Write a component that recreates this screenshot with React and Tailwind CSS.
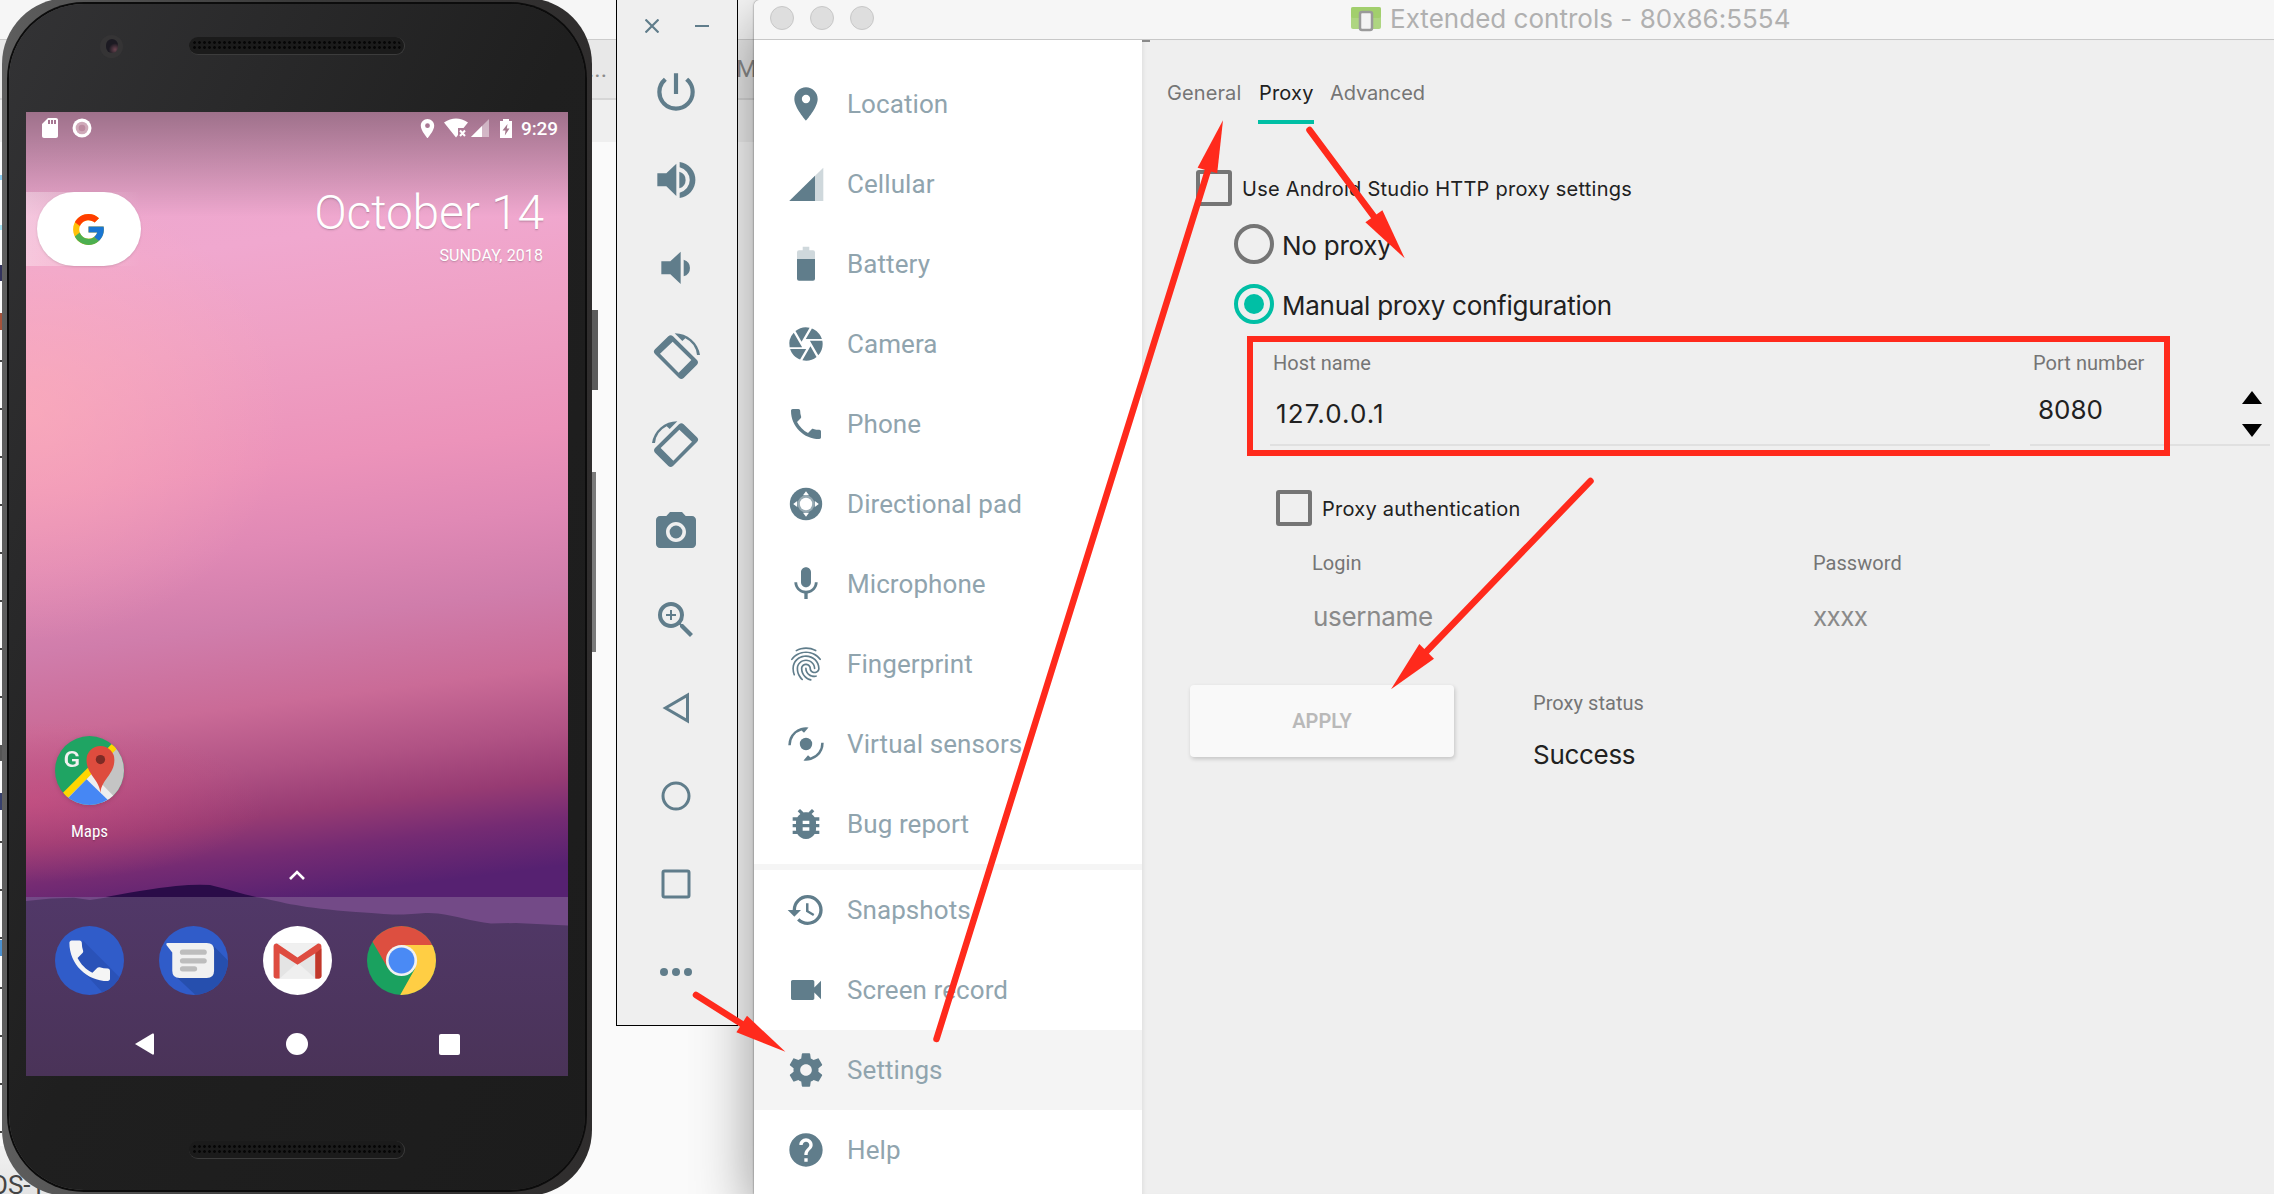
import React from "react";
import {
  MdLocationOn, MdCamera, MdPhone, MdMic, MdFingerprint, MdBugReport, MdHistory,
  MdVideocam, MdHelp, MdPowerSettingsNew, MdPhotoCamera, MdZoomIn, MdSdCard,
} from "react-icons/md";
import { FcGoogle } from "react-icons/fc";

/* ---------- sidebar icons ---------- */

const CellularIcon = () => (
  <svg viewBox="0 0 40 40" className="size-10">
    <path d="M3.3 37L37.3 3.7V37z" fill="#cfd8dc" />
    <path d="M3.3 37L29 11.8V37z" fill="#607d8b" />
  </svg>
);

const BatteryIcon = () => (
  <svg viewBox="0 0 40 40" className="size-10">
    <path d="M13 6.3h3.7V2.8h6.6v3.5H27a2 2 0 0 1 2 2V15H11V8.300a2 2 0 0 1 2-2z" fill="#cfd8dc" />
    <path d="M11 15h18v19.700a2 2 0 0 1-2 2H13a2 2 0 0 1-2-2z" fill="#607d8b" />
  </svg>
);

const DpadIcon = () => (
  <svg viewBox="0 0 40 40" className="size-10">
    <circle cx="20" cy="20" r="16.2" fill="#607d8b" />
    <circle cx="20" cy="20" r="8.400" fill="#fff" fillOpacity="0.350" />
    <circle cx="20" cy="20" r="6.2" fill="#fff" />
    <path d="M20 7.200l3 4h-6zM20 32.800l3-4h-6zM7.200 20l4 3v-6zM32.800 20l-4 3v-6z" fill="#fff" />
  </svg>
);

const SensorsIcon = () => (
  <svg viewBox="0 0 40 40" className="size-10" fill="#607d8b">
    <circle cx="20" cy="20" r="6.200" />
    <path d="M2.300 21.300A17.700 17.700 0 0 1 22.500 3.500L18 8.800L15.500 6.500A15 15 0 0 0 4.800 21.300z" />
    <path d="M37.700 18.700A17.700 17.700 0 0 1 17.500 36.500L22 31.200L24.500 33.500A15 15 0 0 0 35.200 18.700z" />
  </svg>
);

const GearIcon = () => (
  <svg viewBox="0 0 24 24" className="size-10" fill="#607d8b">
    <path d="M19.43 12.98c.04-.32.07-.64.07-.98s-.03-.66-.07-.98l2.11-1.65c.19-.15.24-.42.12-.64l-2-3.46c-.12-.22-.39-.3-.61-.22l-2.49 1c-.52-.4-1.08-.73-1.69-.98l-.38-2.65C14.46 2.18 14.25 2 14 2h-4c-.25 0-.46.18-.49.42l-.38 2.65c-.61.25-1.17.59-1.69.98l-2.49-1c-.23-.09-.49 0-.61.22l-2 3.46c-.13.22-.07.49.12.64l2.11 1.65c-.04.32-.07.65-.07.98s.03.66.07.98l-2.11 1.65c-.19.15-.24.42-.12.64l2 3.46c.12.22.39.3.61.22l2.49-1c.52.4 1.08.73 1.69.98l.38 2.65c.03.24.24.42.49.42h4c.25 0 .46-.18.49-.42l.38-2.65c.61-.25 1.17-.59 1.69-.98l2.49 1c.23.09.49 0 .61-.22l2-3.46c.12-.22.07-.49-.12-.64l-2.11-1.65zM12 15.5c-1.93 0-3.5-1.57-3.5-3.5s1.57-3.5 3.5-3.5 3.5 1.57 3.5 3.5-1.57 3.5-3.5 3.5z" />
  </svg>
);

const menu = [
  ["Location", <MdLocationOn className="size-10" />],
  ["Cellular", <CellularIcon />],
  ["Battery", <BatteryIcon />],
  ["Camera", <MdCamera className="size-10" />],
  ["Phone", <MdPhone className="size-10" />],
  ["Directional pad", <DpadIcon />],
  ["Microphone", <MdMic className="size-10" />],
  ["Fingerprint", <MdFingerprint className="size-10" />],
  ["Virtual sensors", <SensorsIcon />],
  ["Bug report", <MdBugReport className="size-10" />],
  null,
  ["Snapshots", <MdHistory className="size-10" />],
  ["Screen record", <MdVideocam className="size-10" />],
  ["Settings", <GearIcon />],
  ["Help", <MdHelp className="size-10" />],
];

/* ---------- toolbar icons ---------- */

const RotateIcon = ({ className }) => (
  <svg viewBox="33 573 150 150" className={className} fill="#607d8b">
    <path
      fillRule="evenodd"
      d="M45 628L85 589Q92 583 99 589L171 660Q177 667 171 674L131 714Q124 720 117 714L45 642Q38 635 45 628zM60 641L116 698L154 660L98 605z"
    />
    <path d="M180 645A76 76 0 0 0 104 580L127 603L136 595A64 64 0 0 1 171 645z" />
  </svg>
);

const tools = [
  <MdPowerSettingsNew className="size-[50px]" />,
  <svg viewBox="33 45 150 150" className="size-[50px]" fill="#607d8b">
    <path d="M52 100H79L109 71V168L79 139H52z" />
    <path d="M118 95A26 26 0 0 1 118 145z" />
    <path d="M119 66A54.500 54.500 0 0 1 119 174V158A39 39 0 0 0 119 82z" />
  </svg>,
  <svg viewBox="33 309 150 150" className="size-[50px]" fill="#607d8b">
    <path d="M64 364H91L122 335V432L91 403H64z" />
    <path d="M131 359A26 26 0 0 1 131 409z" />
  </svg>,
  <RotateIcon className="size-[50px]" />,
  <RotateIcon className="size-[50px] -scale-x-100" />,
  <MdPhotoCamera className="size-12" />,
  <MdZoomIn className="size-12" />,
  <svg viewBox="0 0 48 48" className="size-12" fill="none" stroke="#607d8b" strokeWidth="3">
    <path d="M35.500 11.200V36.800L13.500 24z" />
  </svg>,
  <svg viewBox="0 0 48 48" className="size-12" fill="none" stroke="#607d8b" strokeWidth="3">
    <circle cx="24" cy="24" r="13" />
  </svg>,
  <svg viewBox="0 0 48 48" className="size-12" fill="none" stroke="#607d8b" strokeWidth="3">
    <rect x="11" y="11" width="26" height="26" rx="1.500" />
  </svg>,
  <svg viewBox="0 0 48 48" className="size-12" fill="#607d8b">
    <circle cx="12" cy="24" r="4" />
    <circle cx="24" cy="24" r="4" />
    <circle cx="36" cy="24" r="4" />
  </svg>,
];

/* ---------- phone ---------- */

const Wallpaper = () => (
  <svg viewBox="0 0 542 964" className="absolute inset-0 h-full w-full">
    <defs>
      <linearGradient id="sky" gradientUnits="userSpaceOnUse" x1="190" y1="0" x2="290" y2="785">
        <stop offset="0" stopColor="#e9a6cc" />
        <stop offset="0.17" stopColor="#f0a8cf" />
        <stop offset="0.3" stopColor="#efa0c4" />
        <stop offset="0.45" stopColor="#ec93ba" />
        <stop offset="0.55" stopColor="#e089b5" />
        <stop offset="0.65" stopColor="#d07dab" />
        <stop offset="0.75" stopColor="#ca6b97" />
        <stop offset="0.83" stopColor="#b05284" />
        <stop offset="0.89" stopColor="#973b73" />
        <stop offset="0.94" stopColor="#752b73" />
        <stop offset="1" stopColor="#562171" />
      </linearGradient>
      <radialGradient id="glow" cx="0.5" cy="0.5" r="0.5">
        <stop offset="0" stopColor="#ffb0b8" stopOpacity="0.6" />
        <stop offset="1" stopColor="#ffb0b8" stopOpacity="0" />
      </radialGradient>
      <radialGradient id="ember" cx="0.5" cy="0.5" r="0.5">
        <stop offset="0" stopColor="#d84f80" stopOpacity="0.45" />
        <stop offset="1" stopColor="#d84f80" stopOpacity="0" />
      </radialGradient>
      <linearGradient id="scrim" x1="0" y1="0" x2="0" y2="1">
        <stop offset="0" stopOpacity="0.32" />
        <stop offset="1" stopOpacity="0" />
      </linearGradient>
      <linearGradient id="ground" x1="0" y1="0" x2="0" y2="1">
        <stop offset="0" stopColor="#513868" />
        <stop offset="1" stopColor="#4a3358" />
      </linearGradient>
    </defs>
    <rect width="542" height="964" fill="url(#sky)" />
    <ellipse cx="0" cy="300" rx="260" ry="230" fill="url(#glow)" />
    <ellipse cx="0" cy="690" rx="240" ry="80" fill="url(#ember)" />
    <rect width="542" height="105" fill="url(#scrim)" />
    <path d="M70 787C100 781 130 776 150 774Q170 772 184 773C205 778 215 782 235 786z" fill="#2a0c48" />
    <rect y="785" width="542" height="179" fill="#734a87" />
    <path
      d="M0 789L25 786.500L48 785.800L64 788L84 785H229C245 787 255 791 270 793Q290 797 330 800T373 802.500C390 802 400 800 412 801.500C430 804 445 809 465 811.500L490 811L542 813.500V964H0z"
      fill="url(#ground)"
    />
  </svg>
);

const MapsIcon = () => (
  <svg viewBox="0 0 208 208" className="size-[69px] drop-shadow-sm">
    <clipPath id="mapsClip"><circle cx="104" cy="104" r="104" /></clipPath>
    <g clipPath="url(#mapsClip)">
      <rect width="208" height="208" fill="#1fa463" />
      <path d="M0 212L190 20L208 30V208H0z" fill="#c4c4c4" />
      <path d="M95 130L110 112L185 190L150 208z" fill="#eee" />
      <path d="M95 130L20 208H175z" fill="#4687f4" />
      <path d="M26 184L186 24" stroke="#ffd600" strokeWidth="21" />
    </g>
    <text x="26" y="95" fontFamily="Roboto" fontSize="74" fontWeight="500" fill="#f1f1f1">G</text>
    <path d="M137 171C133 130 95 115 95 72A42 42 0 0 1 179 72C179 115 141 130 137 171z" fill="#de4c3e" />
    <circle cx="137" cy="71" r="14" fill="#7d2b25" />
  </svg>
);

const DialerIcon = () => (
  <svg viewBox="0 0 208 208" className="size-[69px]">
    <clipPath id="dialClip"><circle cx="104" cy="104" r="104" /></clipPath>
    <circle cx="104" cy="104" r="104" fill="#305cc9" />
    <path clipPath="url(#dialClip)" d="M84 44L208 168V208H150L60 110z" fill="#2a52b8" />
    <g transform="translate(23 23) scale(6.800)">
      <path fill="#f5f5f5" d="M6.620 10.790c1.440 2.830 3.760 5.140 6.590 6.590l2.200-2.200c.27-.27.67-.36 1.020-.24 1.120.37 2.330.57 3.570.57.55 0 1 .45 1 1V20c0 .55-.45 1-1 1-9.390 0-17-7.610-17-17 0-.55.45-1 1-1h3.500c.55 0 1 .45 1 1 0 1.250.2 2.450.57 3.570.11.35.03.74-.25 1.020l-2.200 2.200z" />
    </g>
  </svg>
);

const MessagesIcon = () => (
  <svg viewBox="0 0 208 208" className="size-[69px]">
    <clipPath id="msgClip"><circle cx="104" cy="104" r="104" /></clipPath>
    <circle cx="104" cy="104" r="104" fill="#305cc9" />
    <path clipPath="url(#msgClip)" d="M160 56L208 104V208H110L46 148z" fill="#264fae" />
    <path d="M26 51H144Q166 51 166 73V135Q166 157 144 157H62Q40 157 40 135V80L23 58Q20 51 26 51z" fill="#f1f1f1" />
    <g fill="#bdbdbd">
      <rect x="63" y="71" width="81" height="16" rx="8" />
      <rect x="63" y="97" width="81" height="16" rx="8" />
      <rect x="63" y="121" width="52" height="16" rx="8" />
    </g>
  </svg>
);

const GmailIcon = () => (
  <svg viewBox="0 0 208 208" className="size-[69px]">
    <circle cx="104" cy="104" r="104" fill="#fff" />
    <rect x="32" y="52" width="144" height="106" rx="8" fill="#e4e4e4" />
    <path d="M50 158L104 110L158 158z" fill="#efefef" />
    <path d="M40 52H168L104 100z" fill="#f0f0f0" />
    <path d="M32 62Q32 53 42 53L104 95L166 53Q176 53 176 62V150Q176 158 168 158H158V82L104 117L50 82V158H40Q32 158 32 150z" fill="#de4c40" />
    <path d="M158 82L176 68V150Q176 158 168 158H158z" fill="#c1382b" />
  </svg>
);

const ChromeIcon = () => (
  <svg viewBox="0 0 208 208" className="size-[69px]">
    <clipPath id="chromeClip"><circle cx="104" cy="104" r="104" /></clipPath>
    <g clipPath="url(#chromeClip)">
      <rect width="208" height="208" fill="#1aa15f" />
      <path d="M104 57H208V208H100L145 128z" fill="#ffce44" />
      <path d="M0 0H208V57H104L63 127L18 50L0 20z" fill="#dd4f40" />
    </g>
    <circle cx="104" cy="104" r="47" fill="#f1f1f1" />
    <circle cx="104" cy="104" r="39" fill="#4a8af5" />
  </svg>
);

const Speaker = () => (
  <div className="h-[18px] w-[216px] rounded-full border-r border-b border-[#3c3c3c] bg-[#1b1b1b] p-[3px]">
    <div className="h-full w-full rounded-full bg-[radial-gradient(#060606_1.2px,transparent_1.6px)] bg-size-[5px_5px]" />
  </div>
);

function StatusBar() {
  return (
    <div className="flex h-8 items-center justify-between pr-[10px] pl-3">
      <div className="flex items-center gap-2.5">
        <MdSdCard className="size-6 text-white" />
        <svg viewBox="0 0 20 20" className="size-5">
          <circle cx="10" cy="10" r="9.500" fill="#fff" />
          <circle cx="10" cy="10" r="6.300" fill="#cfa9b9" />
          <circle cx="10" cy="10" r="3.300" fill="#bc8ba0" />
        </svg>
      </div>
      <div className="flex items-center">
        <MdLocationOn className="h-[23px] w-[23px] text-white" />
        <svg viewBox="0 0 24 20" className="ml-[5px] h-5 w-6">
          <path d="M0 4.500Q12-3.500 24 4.500L19.500 10H14V17L12 19.500z" fill="#fff" />
          <path d="M16 12.500L21 18M21 12.500L16 18" stroke="#fff" strokeWidth="2" />
        </svg>
        <svg viewBox="0 0 18 18" className="ml-[3px] size-[18px]">
          <path d="M0 18L18 0V18z" fill="#fff" opacity=".45" />
          <path d="M0 18L11 7V18z" fill="#fff" />
        </svg>
        <svg viewBox="0 0 12 19" className="ml-[11px] h-[19px] w-3">
          <path d="M3 0h6v2h3v17H0V2h3z" fill="#fff" />
          <path d="M7.500 5L2.500 11.500H5.500L4.800 16.500L9.500 9.500H6.800z" fill="#a3788c" />
        </svg>
        <span className="ml-[9px] pt-px text-[19px] leading-6 font-medium tracking-[-0.1px] text-white">9:29</span>
      </div>
    </div>
  );
}

function Phone() {
  return (
    <div className="absolute -top-0.5 left-0.5 flex">
      <div className="h-[1198px] w-[590px] rounded-[66px] bg-gradient-to-r from-[#5e5e5e] via-[#3a3a3a] to-[#2f2d2d] px-[7px] py-1.5">
        <div className="flex h-full w-full flex-col rounded-[75px] bg-gradient-to-br from-[#333335] via-[#1f1f1f] to-[#1c1c1c] font-[Roboto] ring-2 ring-[#0c0c0c]">
          <div className="flex h-[108px] items-start">
            <div className="flex h-[84px] items-center pl-[91px]">
              <div className="flex size-[23px] items-center justify-center rounded-full bg-[#353435]">
                <div className="h-3.5 w-3 rounded-full bg-[radial-gradient(circle_at_75%_75%,#6b4450,#1c1a22_45%)]" />
              </div>
              <div className="ml-[66px]"><Speaker /></div>
            </div>
          </div>
          <div className="relative ml-[17px] h-[964px] w-[542px] overflow-hidden">
            <Wallpaper />
            <div className="relative flex h-full flex-col">
              <StatusBar />
              <div className="mt-12 flex h-[74px] justify-between">
                <div className="flex bg-gradient-to-r from-white/35 to-white/0 pl-[11px]">
                  <div className="flex h-[74px] w-[104px] items-center justify-center rounded-[37px] bg-white pr-0.5 shadow">
                    <FcGoogle className="size-[37px]" />
                  </div>
                </div>
                <div className="flex flex-col items-end pr-6 text-white text-shadow-sm">
                  <span className="-mt-[3px] text-[48px] leading-[48px] font-light tracking-[-0.2px]">October 14</span>
                  <span className="mt-[9px] pr-px text-base leading-5 tracking-[0.1px]">SUNDAY, 2018</span>
                </div>
              </div>
              <div className="mt-[470px] ml-[29px] flex w-[69px] flex-col items-center">
                <MapsIcon />
                <span className="mt-4 font-['Roboto_Condensed'] text-[17px] leading-5 text-white text-shadow-sm">Maps</span>
              </div>
              <svg viewBox="0 0 16 10" className="mt-[29px] ml-[263px] h-2.5 w-4" fill="none" stroke="#fff" strokeWidth="2.600">
                <path d="M1 9L8 2L15 9" />
              </svg>
              <div className="mt-[46px] ml-[29px] flex gap-[35px]">
                <DialerIcon />
                <MessagesIcon />
                <GmailIcon />
                <ChromeIcon />
              </div>
              <div className="mt-[38px] flex items-center justify-between pr-[108px] pl-[109px]">
                <svg viewBox="0 0 19 22" className="h-[22px] w-[19px]"><path d="M0 11L17.500 .500Q19 0 19 1.500V20.500Q19 22 17.500 21.500z" fill="#fff" /></svg>
                <div className="size-[22px] rounded-full bg-white" />
                <div className="size-[21px] rounded-[2px] bg-white" />
              </div>
            </div>
          </div>
          <div className="flex justify-center pt-[65px]"><Speaker /></div>
        </div>
      </div>
      <div className="flex flex-col pt-[312px]">
        <div className="h-20 w-1.5 bg-[#5c5c5c]" />
        <div className="mt-[82px] h-[180px] w-1 bg-[#7a7a7a]" />
      </div>
    </div>
  );
}

/* ---------- windows behind the phone ---------- */

function Backdrop() {
  return (
    <div className="absolute inset-0 flex flex-col bg-[#fafafa] font-[Roboto]">
      <div className="h-[39px] bg-[#f6f6f6]" />
      <div className="h-px bg-[#cccccc]" />
      <div className="flex h-[58px] items-center overflow-hidden bg-[#e8e8e8] pl-[588px] text-2xl text-[#8a8a8a]">
        <span className="w-[148px]">...</span>
        <span>M.</span>
      </div>
      <div className="h-0.5 bg-[#d6d6d6]" />
      <div className="h-[42px] bg-[#efefef]" />
      <div className="flex flex-1 flex-col">
        <div className="mt-[33px] h-[5px] w-0.5 bg-[#8ecdf0]" />
        <div className="mt-[45px] h-[5px] w-0.5 bg-[#a9e3f2]" />
        <div className="mt-[35px] h-4 w-0.5 bg-[#33335c]" />
        <div className="mt-8 h-[17px] w-0.5 bg-[#a5523a]" />
        <div className="mt-[30px] h-[376px] w-0.5 bg-[repeating-linear-gradient(#444_0_2px,transparent_2px_48px)]" />
        <div className="mt-[9px] h-4 w-0.5 bg-[#555]" />
        <div className="mt-8 h-[17px] w-0.5 bg-[#37406c]" />
        <div className="mt-[31px] h-[98px] w-0.5 bg-[repeating-linear-gradient(#444_0_2px,transparent_2px_48px)]" />
        <div className="mt-px h-4 w-0.5 bg-[#4a90d0]" />
        <div className="mt-[31px] h-[146px] w-0.5 bg-[repeating-linear-gradient(#444_0_2px,transparent_2px_48px)]" />
      </div>
      <div className="flex h-12 w-[90px] items-end overflow-hidden bg-gradient-to-b from-[#f2f2f2] to-[#e4e4e4]">
        <span className="-ml-2.5 translate-y-1.5 text-[26px] leading-[30px] text-[#444]">OS-1</span>
      </div>
    </div>
  );
}

/* ---------- emulator toolbar ---------- */

function Toolbar() {
  return (
    <div className="absolute top-0 left-[616px] h-[1026px] w-[122px] border-x border-b border-black bg-[#efefef] text-[#607d8b]">
      <div className="flex h-12 items-center justify-center gap-9 pt-1">
        <svg viewBox="0 0 14 14" className="size-3.5" fill="none" stroke="#607d8b" strokeWidth="2.200">
          <path d="M.5 .5L13.500 13.500M13.500 .5L.5 13.500" />
        </svg>
        <div className="h-0.5 w-3.5 bg-[#607d8b]" />
      </div>
      {tools.map((icon, i) => (
        <div key={i} className="flex h-[88px] items-center justify-center pr-0.5">{icon}</div>
      ))}
    </div>
  );
}

/* ---------- extended controls ---------- */

const Field = ({ label, children, className }) => (
  <div className={className}>
    <div className="pl-[3px] font-[Roboto] text-xl leading-6 tracking-[0.05px] text-[#757575]">{label}</div>
    {children}
  </div>
);

function ProxyPane() {
  return (
    <div className="flex-1 bg-[#efefef] font-[Inter] text-[#212121] shadow-[inset_4px_0_4px_-3px_rgba(0,0,0,0.08)]">
      <div className="h-0.5 w-2 bg-[#8a8a8a]" />
      <div className="flex gap-4 pt-[39px] pl-6 text-xl leading-6">
        <span className="w-[76px] pl-px tracking-[0.1px] text-[#757575]">General</span>
        <div className="h-[43px] w-14 border-b-4 border-[#00bfa5] pl-px tracking-[0.2px]">Proxy</div>
        <span className="tracking-[-0.1px] text-[#757575]">Advanced</span>
      </div>
      <div className="mt-[46px] flex h-9 items-center pl-[54px]">
        <div className="size-9 rounded-[3px] border-4 border-[#757575]" />
        <span className="ml-2.5 pt-0.5 text-xl leading-6 tracking-[0.25px]">Use Android Studio HTTP proxy settings</span>
      </div>
      <div className="mt-[18px] flex h-10 items-center pl-[92px]">
        <div className="size-10 rounded-full border-4 border-[#757575]" />
        <span className="ml-2 pt-1 text-[26px] leading-8 tracking-[-0.25px]">No proxy</span>
      </div>
      <div className="mt-5 flex h-10 items-center pl-[92px]">
        <div className="flex size-10 items-center justify-center rounded-full border-4 border-[#00bfa5]">
          <div className="size-5 rounded-full bg-[#00bfa5]" />
        </div>
        <span className="ml-2 pt-1 text-[26px] leading-8 tracking-[-0.26px]">Manual proxy configuration</span>
      </div>
      <div className="mt-[27px] flex gap-10 pl-32">
        <Field label="Host name" className="h-[95px] w-[720px] border-b-2 border-[#e0e0e0]">
          <div className="mt-[23px] pl-1.5 text-[26px] leading-8 tracking-[1.1px]">127.0.0.1</div>
        </Field>
        <Field label="Port number" className="h-[95px] w-[240px] border-b-2 border-[#e0e0e0]">
          <div className="flex justify-between pr-2 pl-2">
            <span className="pt-[19px] text-[26px] leading-8">8080</span>
            <div className="flex flex-col gap-5 pt-4">
              <svg viewBox="0 0 20 13" className="h-[13px] w-5"><path d="M10 0L20 13H0z" /></svg>
              <svg viewBox="0 0 20 13" className="h-[13px] w-5"><path d="M10 13L20 0H0z" /></svg>
            </div>
          </div>
        </Field>
      </div>
      <div className="mt-11 flex h-9 items-center pl-[134px]">
        <div className="size-9 rounded-[3px] border-4 border-[#757575]" />
        <span className="ml-2.5 pt-0.5 text-xl leading-6 tracking-[0.25px]">Proxy authentication</span>
      </div>
      <div className="mt-[25px] flex pl-[167px]">
        <Field label="Login" className="w-[501px]">
          <div className="mt-[26px] pl-1 text-[26px] leading-8 tracking-[-0.3px] text-[#8a8a8a]">username</div>
        </Field>
        <Field label="Password">
          <div className="mt-[26px] pl-[3px] text-[26px] leading-8 tracking-[-0.6px] text-[#8a8a8a]">xxxx</div>
        </Field>
      </div>
      <div className="mt-[52px] flex pl-12">
        <div className="flex h-[72px] w-[264px] items-center justify-center rounded bg-[#f9f9f9] font-[Roboto] text-xl leading-6 font-semibold text-[#b9b9b9] shadow-[1px_2px_4px_rgba(0,0,0,0.18)]">
          APPLY
        </div>
        <Field label="Proxy status" className="ml-[76px] pt-1.5">
          <div className="mt-6 pl-[3px] text-[26px] leading-8 tracking-[-0.3px]">Success</div>
        </Field>
      </div>
    </div>
  );
}

function ExtendedControls() {
  return (
    <div className="absolute top-0 left-[754px] flex h-[1194px] w-[1520px] flex-col rounded-tl-[6px] bg-white shadow-[0_20px_60px_rgba(0,0,0,0.42),0_0_2px_rgba(0,0,0,0.6)]">
      <div className="flex h-10 items-center rounded-tl-[6px] border-b border-[#c8c8c8] bg-[#f6f6f6] pb-[3px] pl-4">
        <div className="flex gap-4">
          <div className="size-6 rounded-full border border-[#c8c8c8] bg-[#dedede]" />
          <div className="size-6 rounded-full border border-[#c8c8c8] bg-[#dedede]" />
          <div className="size-6 rounded-full border border-[#c8c8c8] bg-[#dedede]" />
        </div>
        <svg viewBox="0 0 30 26" className="mt-0.5 ml-[477px] h-[26px] w-[30px]">
          <rect y="1" width="30" height="22" rx="2" fill="#aed581" />
          <rect y="1" width="30" height="11" rx="2" fill="#9ccc65" opacity=".7" />
          <rect x="9" y="6" width="12" height="18" rx="2" fill="#f3f3f3" stroke="#9a9a9a" strokeWidth="2.500" />
        </svg>
        <span className="mt-0.5 ml-[9px] font-[Inter] text-[26px] leading-8 tracking-[0.02px] whitespace-nowrap text-[#b0b0b0]">Extended controls - 80x86:5554</span>
      </div>
      <div className="flex flex-1">
        <div className="w-[388px] bg-white pt-6 text-[#607d8b]">
          {menu.map((item, i) =>
            item ? (
              <div
                key={i}
                className={`flex h-20 items-center gap-[21px] pl-8 ${item[0] === "Settings" ? "bg-[#f4f4f4]" : ""}`}
              >
                {item[1]}
                <span className="font-[Roboto] text-[26px] leading-8 tracking-[0.08px] text-[#90a4ae]">{item[0]}</span>
              </div>
            ) : (
              <div key={i} className="h-1.5 bg-[#f5f5f5]" />
            )
          )}
        </div>
        <ProxyPane />
      </div>
    </div>
  );
}

/* ---------- red annotations ---------- */

const Annotations = () => (
  <>
    <div className="absolute top-[336px] left-[1247px] h-[120px] w-[923px] border-[6px] border-[#ff2a1c]" />
    <svg viewBox="0 0 2274 1194" className="absolute inset-0 h-[1194px] w-[2274px]" fill="#ff2a1c" stroke="#ff2a1c">
      <g strokeWidth="6.500" strokeLinecap="round">
        <path d="M696 995L745 1026" />
        <path d="M936.500 1039L1209 167" />
        <path d="M1309.500 130L1375 218" />
        <path d="M1590.500 481L1425 653" />
      </g>
      <g stroke="none">
        <path d="M785.400 1051.700L747 1015.700L736.400 1032.300z" />
        <path d="M1223 120.300L1197.600 167.700L1217.200 173.300z" />
        <path d="M1404.700 258.300L1382.400 210.300L1365.400 222.300z" />
        <path d="M1391 689.300L1419.300 644L1434 658.700z" />
      </g>
    </svg>
  </>
);

export default function App() {
  return (
    <div className="relative h-[1194px] w-[2274px] overflow-hidden">
      <Backdrop />
      <ExtendedControls />
      <Phone />
      <Toolbar />
      <Annotations />
    </div>
  );
}
